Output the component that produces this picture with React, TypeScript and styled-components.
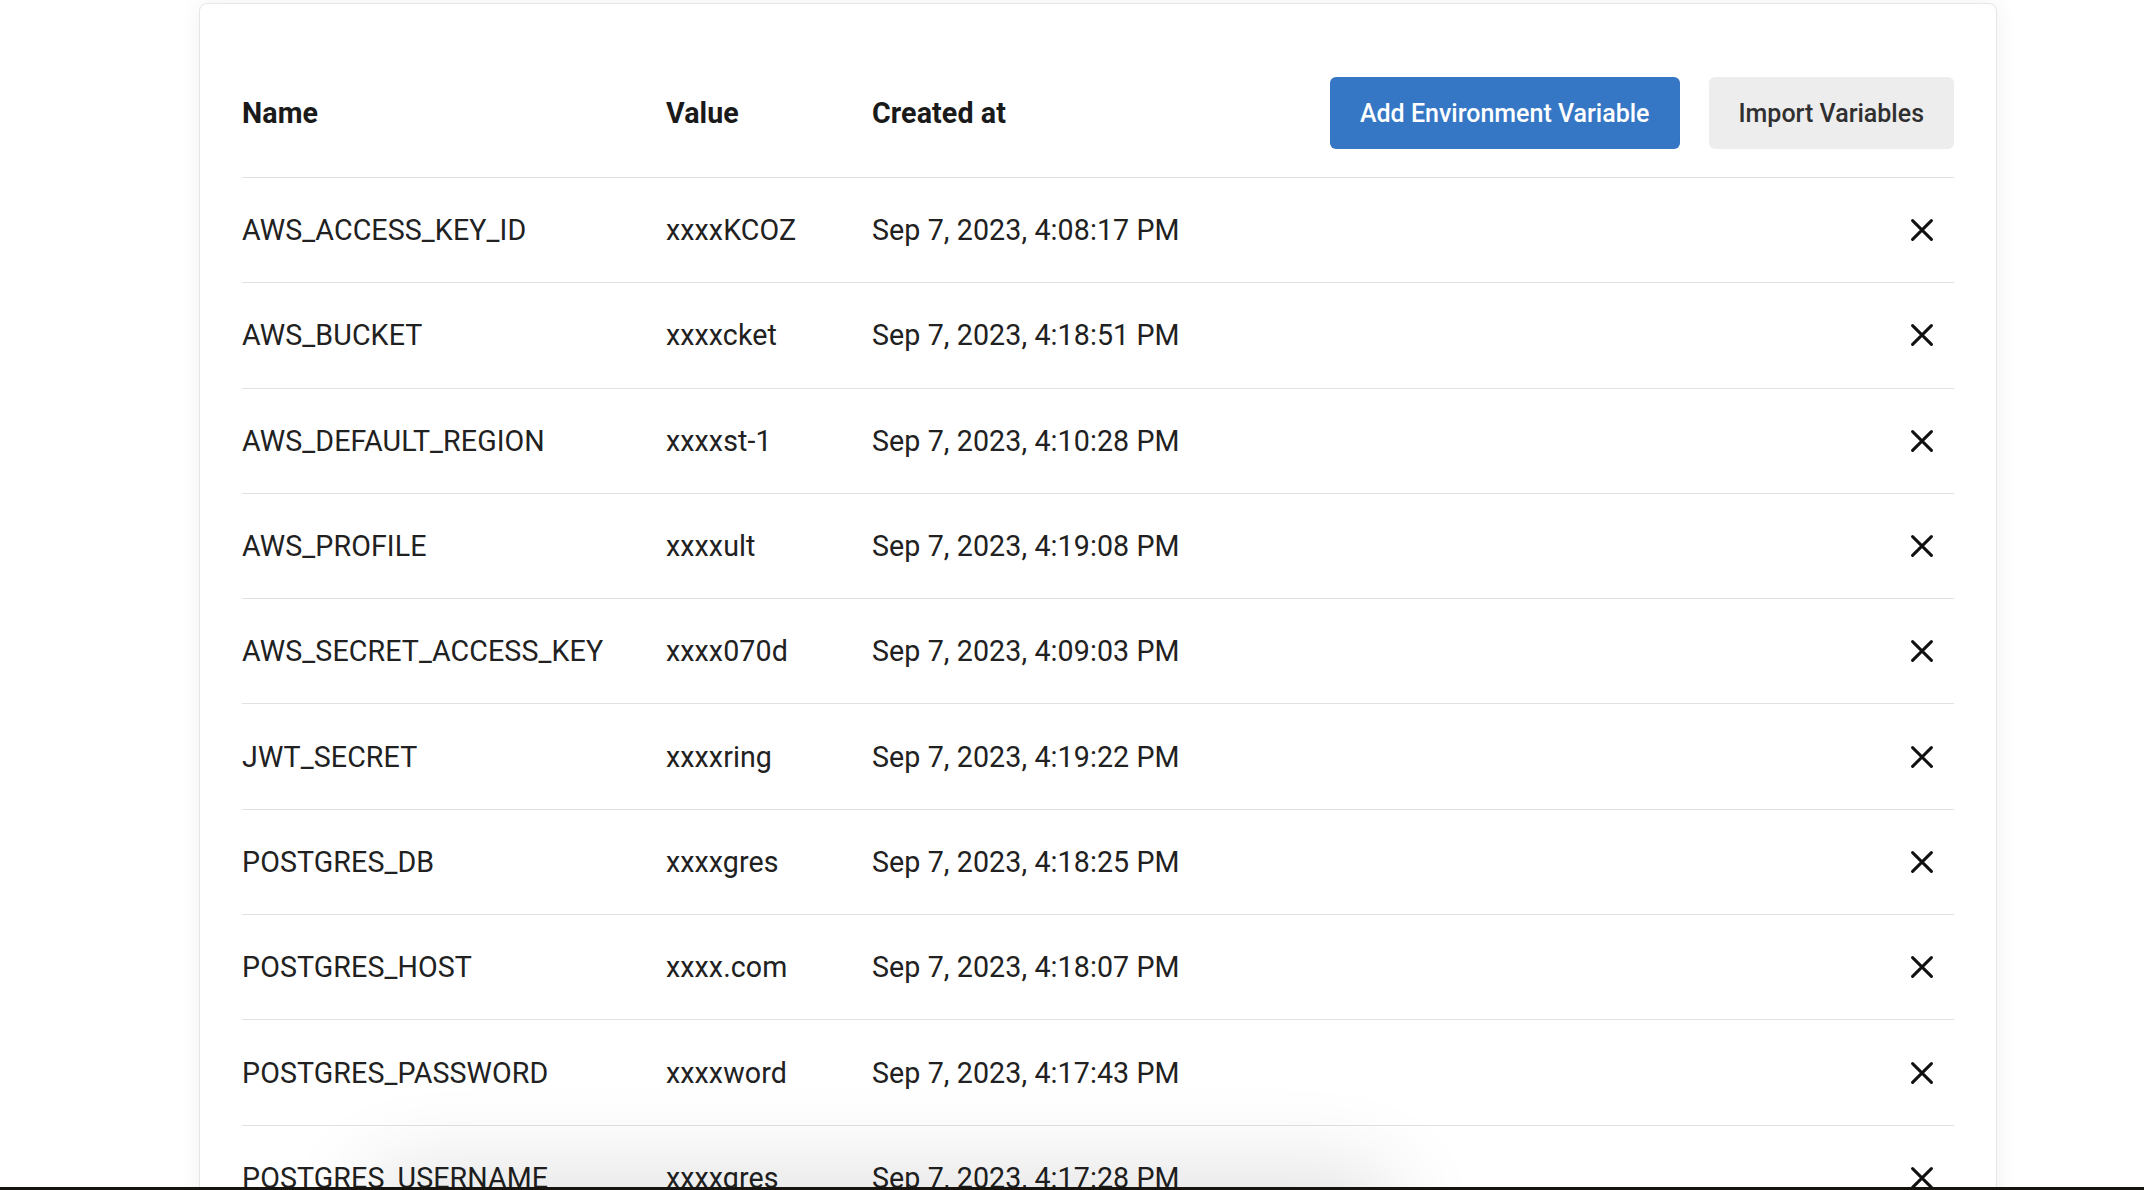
import React from "react";
import styled, { createGlobalStyle } from "styled-components";

const GlobalStyle = createGlobalStyle`
  html, body {
    margin: 0;
    padding: 0;
    background: #ffffff;
    overflow: hidden;
    height: 100%;
  }
  body {
    font-family: Roboto, "Liberation Sans", Arial, sans-serif;
    color: #212121;
  }
  * { box-sizing: border-box; }
`;

const Page = styled.div`
  padding: 3px 0 0 199px;
  width: 2144px;
  height: 1190px;
  overflow: hidden;
`;

const Card = styled.div`
  width: 1798px;
  background: #ffffff;
  border: 1px solid #e6e6e6;
  border-radius: 8px;
  box-shadow: 0 0 22px rgba(0, 0, 0, 0.06);
  padding: 44px 42px 0 42px;
`;

const Row = styled.div<{ $header?: boolean }>`
  display: grid;
  grid-template-columns: 424px 206px 1fr auto;
  align-items: center;
  border-bottom: 1px solid #e2e2e2;
  height: ${(p) => (p.$header ? "130px" : "105.3px")};
  padding-top: ${(p) => (p.$header ? "29px" : "0")};
  padding-bottom: ${(p) => (p.$header ? "29px" : "0")};
`;

const HeadCell = styled.div`
  font-size: 28.6px;
  letter-spacing: 0.1px;
  font-weight: 700;
  color: #1a1a1a;
  white-space: nowrap;
`;

const Cell = styled.div`
  font-size: 28.6px;
  letter-spacing: 0.1px;
  font-weight: 400;
  color: #212121;
  white-space: nowrap;
`;

const Actions = styled.div`
  display: flex;
  gap: 29px;
  justify-content: flex-end;
`;

const Button = styled.button<{ $primary?: boolean }>`
  height: 72px;
  padding: 0 30px;
  border: none;
  border-radius: 6px;
  font-family: Roboto, "Liberation Sans", Arial, sans-serif;
  font-size: 25px;
  font-weight: 500;
  cursor: pointer;
  background: ${(p) => (p.$primary ? "#3577c5" : "#ededed")};
  color: ${(p) => (p.$primary ? "#ffffff" : "#303030")};
`;

const DeleteButton = styled.button`
  width: 64px;
  height: 64px;
  display: flex;
  align-items: center;
  justify-content: center;
  background: transparent;
  border: none;
  padding: 0;
  cursor: pointer;
`;

const BottomShade = styled.div`
  position: fixed;
  left: 380px;
  bottom: -60px;
  width: 1000px;
  height: 60px;
  border-radius: 30px;
  box-shadow: 0 0 90px 20px rgba(0, 0, 0, 0.12);
  pointer-events: none;
`;

const BottomBar = styled.div`
  position: fixed;
  left: 0;
  right: 0;
  bottom: 0;
  height: 3px;
  background: #17130f;
`;

const CloseIcon = () => (
  <svg width="22" height="22" viewBox="0 0 22 22" fill="none">
    <path
      d="M1.6 1.6 L20.4 20.4 M20.4 1.6 L1.6 20.4"
      stroke="#111111"
      strokeWidth="3"
      strokeLinecap="round"
    />
  </svg>
);

const rows: [string, string, string][] = [
  ["AWS_ACCESS_KEY_ID", "xxxxKCOZ", "Sep 7, 2023, 4:08:17 PM"],
  ["AWS_BUCKET", "xxxxcket", "Sep 7, 2023, 4:18:51 PM"],
  ["AWS_DEFAULT_REGION", "xxxxst-1", "Sep 7, 2023, 4:10:28 PM"],
  ["AWS_PROFILE", "xxxxult", "Sep 7, 2023, 4:19:08 PM"],
  ["AWS_SECRET_ACCESS_KEY", "xxxx070d", "Sep 7, 2023, 4:09:03 PM"],
  ["JWT_SECRET", "xxxxring", "Sep 7, 2023, 4:19:22 PM"],
  ["POSTGRES_DB", "xxxxgres", "Sep 7, 2023, 4:18:25 PM"],
  ["POSTGRES_HOST", "xxxx.com", "Sep 7, 2023, 4:18:07 PM"],
  ["POSTGRES_PASSWORD", "xxxxword", "Sep 7, 2023, 4:17:43 PM"],
  ["POSTGRES_USERNAME", "xxxxgres", "Sep 7, 2023, 4:17:28 PM"],
];

export default function App() {
  return (
    <>
      <GlobalStyle />
      <Page>
        <Card>
          <Row $header>
            <HeadCell>Name</HeadCell>
            <HeadCell>Value</HeadCell>
            <HeadCell>Created at</HeadCell>
            <Actions>
              <Button $primary>Add Environment Variable</Button>
              <Button>Import Variables</Button>
            </Actions>
          </Row>
          {rows.map(([name, value, created]) => (
            <Row key={name}>
              <Cell>{name}</Cell>
              <Cell>{value}</Cell>
              <Cell>{created}</Cell>
              <DeleteButton aria-label="Delete">
                <CloseIcon />
              </DeleteButton>
            </Row>
          ))}
        </Card>
      </Page>
      <BottomShade />
      <BottomBar />
    </>
  );
}
